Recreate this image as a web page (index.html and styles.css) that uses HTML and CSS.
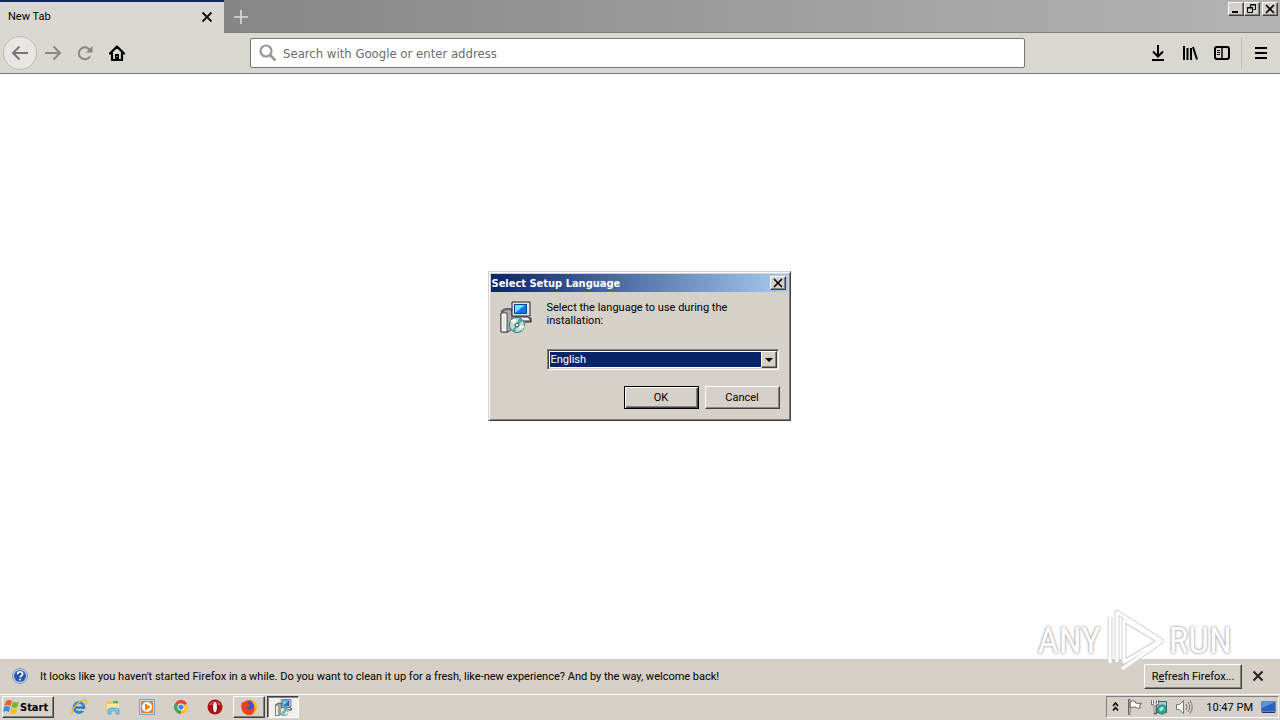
FILE: index.html
```html
<!DOCTYPE html>
<html lang="en">
<head>
<meta charset="utf-8">
<title>New Tab</title>
<link rel="stylesheet" href="styles.css">
</head>
<body>
<div class="desktop">
  <div class="browser">
    <header class="titlebar">
      <div class="tab">
        <span class="tab-title">New Tab</span>
        <button class="plain" aria-label="Close tab"><svg width="12" height="12" viewBox="0 0 12 12"><path d="M1.500 1.500l9 9M10.500 1.500l-9 9" stroke="#111" stroke-width="1.800"/></svg></button>
      </div>
      <button class="plain new-tab" aria-label="Open new tab"><svg width="16" height="16" viewBox="0 0 16 16"><path d="M8 1v14M1 8h14" stroke="#ddd" stroke-width="1.600"/></svg></button>
      <div class="window-buttons">
        <button class="caption" aria-label="Minimize"><svg width="10" height="10" viewBox="0 0 10 10"><path d="M1 8h6" stroke="#000" stroke-width="2"/></svg></button>
        <button class="caption" aria-label="Restore"><svg width="10" height="10" viewBox="0 0 10 10" fill="none" stroke="#000"><path d="M3.500 3.500V.5h5v5h-2M3 1h6M.5 3.500h5v5h-5zM0 4h6"/></svg></button>
        <button class="caption caption-close" aria-label="Close"><svg width="10" height="10" viewBox="0 0 10 10"><path d="M1 1l8 8M9 1l-8 8" stroke="#000" stroke-width="1.600"/></svg></button>
      </div>
    </header>
    <nav class="toolbar">
      <div class="nav-buttons">
        <button class="plain back" aria-label="Back"><svg width="18" height="16" viewBox="0 0 18 16" fill="none" stroke="#777673" stroke-width="2"><path d="M17 8H2M8.500 1.500L2 8l6.500 6.500"/></svg></button>
        <button class="plain tool" aria-label="Forward"><svg width="18" height="16" viewBox="0 0 18 16" fill="none" stroke="#888784" stroke-width="2"><path d="M1 8h15M9.500 1.500L16 8l-6.500 6.500"/></svg></button>
        <button class="plain tool" aria-label="Reload"><svg width="16" height="16" viewBox="0 0 16 16"><path d="M13 11.500A6 6 0 1 1 12.500 4.500" fill="none" stroke="#888784" stroke-width="2"/><path d="M15.500 1v6.500H9z" fill="#888784"/></svg></button>
        <button class="plain tool" aria-label="Home"><svg width="16" height="16" viewBox="0 0 16 16"><path d="M1 8.500L8 1.500l7 7M3 8v7h10V8" fill="none" stroke="#000" stroke-width="2.200" stroke-linejoin="round" stroke-linecap="round"/><path d="M6 15V9h4v6z"/><path d="M7.500 11h1v1h-1z" fill="#ddd"/></svg></button>
      </div>
      <label class="address">
        <svg width="18" height="18" viewBox="0 0 18 18" fill="none" stroke="#999"><circle cx="7" cy="7" r="5.500" stroke-width="2.200"/><path d="M10.500 10.500l6 6" stroke-width="2.600"/></svg>
        <input type="text" aria-label="Address" placeholder="Search with Google or enter address">
      </label>
      <div class="menu-buttons">
        <button class="plain tool" aria-label="Downloads"><svg width="16" height="16" viewBox="0 0 16 16" fill="none" stroke="#000" stroke-width="2"><path d="M8 0v11M3 6.500l5 5 5-5M2 15h12"/></svg></button>
        <button class="plain tool" aria-label="Library"><svg width="16" height="16" viewBox="0 0 16 16" fill="none" stroke="#000" stroke-width="2"><path d="M2 1v14M5.500 3v12M9 3v12M11 2l4 12.500"/></svg></button>
        <button class="plain tool" aria-label="Sidebars"><svg width="16" height="16" viewBox="0 0 16 16" fill="none" stroke="#000"><rect x="1" y="2" width="14" height="12" rx="2" stroke-width="2"/><path d="M8 2v12" stroke-width="1.500"/><path d="M3 5.500h3M3 7.500h3M3 9.500h3"/></svg></button>
        <button class="plain tool app-menu" aria-label="Open menu"><svg width="12" height="14" viewBox="0 0 12 14" stroke="#000" stroke-width="2"><path d="M0 2h12M0 7h12M0 12h12"/></svg></button>
      </div>
    </nav>
    <main class="page"></main>
    <aside class="notice">
      <svg class="help" width="16" height="16" viewBox="0 0 16 16"><circle cx="8" cy="8" r="7.400" fill="#dfe8f8" stroke="#7089b8"/><circle cx="8" cy="8" r="6" fill="#2454b4"/><path d="M5.600 6.200c0-3.200 5-3.200 5-.2 0 1.800-2.400 1.600-2.400 3.400M8.200 10.800v1.800" fill="none" stroke="#fff" stroke-width="1.700"/></svg>
      <p class="notice-text">It looks like you haven't started Firefox in a while. Do you want to clean it up for a fresh, like-new experience? And by the way, welcome back!</p>
      <button class="push refresh"><span>R<u>e</u>fresh Firefox...</span></button>
      <button class="plain" aria-label="Dismiss"><svg width="12" height="12" viewBox="0 0 12 12"><path d="M1.500 1.500l9 9M10.500 1.500l-9 9" stroke="#222" stroke-width="2"/></svg></button>
    </aside>

    <div class="modal-layer">
      <section class="dialog" role="dialog" aria-labelledby="dialog-title">
        <div class="dialog-bar">
          <h1 class="dialog-title" id="dialog-title">Select Setup Language</h1>
          <button class="caption" aria-label="Close dialog"><svg width="10" height="10" viewBox="0 0 10 10"><path d="M1 1l8 8M9 1l-8 8" stroke="#000" stroke-width="1.600"/></svg></button>
        </div>
        <div class="dialog-body">
          <svg class="setup-icon" width="32" height="32" viewBox="0 0 32 32"><use href="#setup"/></svg>
          <div class="dialog-fields">
            <label class="prompt" for="language">Select the language to use during the installation:</label>
            <div class="combo">
              <select id="language"><option>English</option></select>
              <span class="combo-arrow"><svg width="8" height="4" viewBox="0 0 8 4"><path d="M0 0h8L4 4z"/></svg></span>
            </div>
          </div>
        </div>
        <div class="dialog-actions">
          <button class="push default">OK</button>
          <button class="push">Cancel</button>
        </div>
      </section>
    </div>

    <div class="watermark" aria-hidden="true">
      <span>ANY</span>
      <svg width="58" height="66" viewBox="0 0 58 66" fill="none" stroke-linejoin="round"><g stroke="#d0d0d0" stroke-width="5"><path d="M18 12L53 33 18 54z"/><path d="M11 54V4L56 33 16 61"/><path d="M4 9v46"/></g><g stroke="#fff" stroke-width="3"><path d="M18 12L53 33 18 54z"/><path d="M11 54V4L56 33 16 61"/><path d="M4 9v46"/></g></svg>
      <span>RUN</span>
    </div>
  </div>

  <footer class="taskbar">
    <button class="start"><svg width="17" height="16" viewBox="0 0 17 16"><path d="M3 2q3-2 6 0L7.500 7q-3-2-6 0z" fill="#e8602c"/><path d="M10 2.500q3 2 6 0L14.500 8q-3 2-6 0z" fill="#79b82c"/><path d="M1.200 8q3-2 6 0L6 13q-3-2-6 0z" fill="#3b8fdd"/><path d="M8.200 9q3 2 6 0L13 14q-3 2-6 0z" fill="#f6bd24"/></svg>Start</button>
    <div class="launchers">
      <button class="task" aria-label="Internet Explorer"><svg width="16" height="16" viewBox="0 0 16 16" fill="none"><circle cx="8" cy="8.500" r="5" stroke="#278bd8" stroke-width="2.800"/><path d="M4 8.500h9" stroke="#1b70c4" stroke-width="2.200"/><path d="M11 11h5" stroke="#d6d0c8" stroke-width="2"/><path d="M1.500 15C-1 10 11-1 15 1.500c1 .8 0 3-.8 4" stroke="#eeb52c" stroke-width="1.500"/></svg></button>
      <button class="task" aria-label="Explorer"><svg width="16" height="16" viewBox="0 0 16 16"><path d="M1 2h5l1 2h7v9H1z" fill="#e8c767"/><path d="M2 5h12v8H2z" fill="#faeaa2"/><path d="M8 3h5" stroke="#55ad58" stroke-width="2"/><path d="M3 15v-4q0-2 2-2h7q2 0 2 2v4h-3v-3H6v3z" fill="#82c1e9" stroke="#4b91c4" stroke-width=".7"/></svg></button>
      <button class="task" aria-label="Media Player"><svg width="16" height="16" viewBox="0 0 16 16"><path d="M.5.5h15v15H.5z" fill="#b9dcf5" stroke="#6aa8d8"/><path d="M2 2h12v12H2z" fill="#f27f16"/><circle cx="8" cy="8" r="5" fill="#fff"/><path d="M6 4.500L12 8l-6 3.500z" fill="#f27f16"/></svg></button>
      <button class="task" aria-label="Chrome"><svg width="14" height="14" viewBox="0 0 16 16"><path d="M8 8L1.100 4A8 8 0 0 1 15 4z" fill="#e24536"/><path d="M8 8l7-4a8 8 0 0 1-7 12z" fill="#fbc719"/><path d="M8 8v8A8 8 0 0 1 1.100 4z" fill="#3aa655"/><circle cx="8" cy="8" r="4" fill="#fff"/><circle cx="8" cy="8" r="3" fill="#4285e8"/></svg></button>
      <button class="task" aria-label="Opera"><svg width="16" height="16" viewBox="0 0 16 16"><circle cx="8" cy="8" r="7.500" fill="#ad1214"/><path d="M2 6q6-8 12 0" fill="#d95550"/><ellipse cx="8" cy="8" rx="2.500" ry="6" fill="#eee" stroke="#810c0e"/></svg></button>
      <button class="task running" aria-label="Firefox"><svg width="18" height="18" viewBox="0 0 18 18"><circle cx="9" cy="9.500" r="7.500" fill="#f0511f"/><circle cx="9.500" cy="8.500" r="5" fill="#4a4fc0"/><path d="M2 4l2 1q2-2 4-1-1 2 2 3-2 2-4 2 2 4 6 2 3-2 2-5 4 4 0 9-5 4-10 0Q0 11 2 4z" fill="#f0411f"/><path d="M10 1q7 2 7 8t-6 8q5-4 3-9 0-3-4-7z" fill="#fdb52d"/></svg></button>
      <button class="task running active" aria-label="Select Setup Language"><svg width="17" height="17" viewBox="0 0 32 32"><g id="setup"><path d="M1 12l5-4h6v20l-4 3H1z" fill="#aaa" stroke="#444"/><path d="M1 12h6v19H1z" fill="#f8f8f8" stroke="#444"/><path d="M4 15v13" stroke="#ccc"/><path d="M1 11q5-5 11-2" fill="none" stroke="#666" stroke-width="2"/><path d="M14 16h14l3 4H14z" fill="#eee" stroke="#333"/><path d="M12 1h18v14H12z" fill="#e4e4e4" stroke="#222"/><path d="M14.500 3.500h12v9h-12z" fill="#0a7be6" stroke="#003b9c"/><path d="M15 12V4h10z" fill="#6fe0ff"/><path d="M29 17h2v4h-6" fill="none" stroke="#222"/><circle cx="17" cy="24" r="7.500" fill="#b8dfdc" stroke="#307070"/><path d="M17 24L10 20l5-3zM17 24l5 5 3-4z" fill="#f4fff0"/><path d="M17 24l2-7 4 3zM17 24l-5 5 3 2z" fill="#4cab9e"/><circle cx="17" cy="24" r="2" fill="#fff" stroke="#333"/></g></svg></button>
    </div>
    <div class="tray">
      <svg width="7" height="10" viewBox="0 0 7 10" fill="none" stroke="#000" stroke-width="1.500"><path d="M1 4l2.500-3L6 4M1 8.500l2.500-3L6 8.500"/></svg>
      <svg class="flag" width="16" height="16" viewBox="0 0 16 16" fill="#fff" stroke="#666"><path d="M1.500.5h1.500v15H1.500zM3 2.500q3-1.500 5.500 0v1.500q3 1 6 0l-2 3 1 2q-3 1-5.500-1Q6 7.500 3 9z"/></svg>
      <svg width="17" height="16" viewBox="0 0 17 16"><path d="M5.500 2.500h10v11h-10z" fill="#9ccdd0" stroke="#38686b"/><path d="M1.500 1v4h5V1M4 5v9h2" fill="none" stroke="#555" stroke-width="2.500"/><path d="M1.500 1v4h5V1M4 1v13" fill="none" stroke="#fff"/><circle cx="11" cy="10.500" r="4.500" fill="#36a792" stroke="#1d7470"/><path d="M8 10q3-4 5-1-2 4-4 3z" fill="#a8e2d2"/></svg>
      <svg width="17" height="16" viewBox="0 0 17 16" fill="none" stroke="#777"><path d="M.5 5.500h3l4-4v13l-4-4h-3z" fill="#fff"/><path d="M10 5q2 3 0 6M12 3q3.500 5 0 10M14 1.500q4.500 6.500 0 13"/></svg>
      <time class="clock">10:47 PM</time>
      <svg width="15" height="14" viewBox="0 0 15 14"><path d="M.5 1.500h14v10H.5z" fill="#2a62bd" stroke="#6087bd"/><path d="M1 2h13L1 8z" fill="#5b93dd"/><path d="M1 12.500h13" stroke="#173b78"/></svg>
    </div>
  </footer>
</div>
</body>
</html>
```
FILE: styles.css
```css
* { box-sizing: border-box; }

body {
  margin: 0;
  color: #000;
  font: 11px/13px Tahoma, Roboto, sans-serif;
}

button, input, select { font: inherit; color: inherit; }
button { padding: 0; border: 0; }
svg { display: block; flex: none; }
p, h1 { margin: 0; }

.desktop { display: flex; flex-direction: column; height: 100vh; background: #d5cfc7; }
.browser { position: relative; flex: 1; display: flex; flex-direction: column; min-height: 0; }

.plain { display: flex; align-items: center; justify-content: center; background: none; }

.caption, .push, .combo-arrow {
  display: flex;
  align-items: center;
  justify-content: center;
  background: #d5d0c8;
  border: 1px solid;
  border-color: #fff #404040 #404040 #fff;
  box-shadow: inset -1px -1px #86827c;
}
.caption { width: 16px; height: 14px; }

/* Tabs */
.titlebar {
  display: flex;
  height: 33px;
  background: linear-gradient(90deg, #868686 224px, #b4b4b4);
  box-shadow: inset 0 -1px #808080;
}
.tab {
  display: flex;
  align-items: center;
  justify-content: space-between;
  width: 224px;
  padding: 0 11px 2px 8px;
  border-top: 2px solid #0a246a;
  background: #dad7d1;
}
.new-tab { width: 33px; }
.window-buttons { display: flex; margin: 2px 2px 0 auto; }
.caption-close { margin-left: 2px; }

/* Toolbar */
.toolbar {
  display: grid;
  grid-template-columns: 250px 1fr 255px;
  align-items: center;
  height: 41px;
  border-bottom: 1px solid #777;
  background: #dad6d0;
}
.nav-buttons { display: flex; align-items: center; padding-left: 3px; }
.back { width: 34px; height: 34px; border: 1px solid #bdbab5; border-radius: 50%; background: #e8e6e2; }
.tool { width: 32px; height: 32px; }
.address {
  display: flex;
  align-items: center;
  gap: 6px;
  height: 30px;
  padding: 0 8px;
  border: 1px solid #777;
  border-radius: 2px;
  background: #fff;
}
.address input {
  flex: 1;
  min-width: 0;
  padding: 0;
  border: 0;
  outline: 0;
  background: none;
  font-family: "DejaVu Sans Condensed", sans-serif;
  font-size: 13px;
}
.address input::placeholder { color: #6b6b6b; opacity: 1; }
.menu-buttons { display: flex; justify-content: flex-end; padding-right: 1px; }
.app-menu { width: 38px; margin-left: 3px; border-left: 1px solid #c3bfb9; }

.page { flex: 1; background: #fff; }

/* Notification */
.notice { display: flex; align-items: center; height: 35px; padding: 0 16px 1px 12px; background: #d5cfc6; }
.notice-text { flex: 1; margin-left: 12px; white-space: nowrap; }
.refresh { position: relative; z-index: 2; margin-right: 10px; }

/* Dialog */
.modal-layer { position: absolute; inset: 0; display: grid; place-items: center; padding: 0 2px 2px 0; }
.dialog {
  width: 303px;
  padding: 2px;
  border: 1px solid;
  border-color: #d5d0c8 #404040 #404040 #d5d0c8;
  box-shadow: inset 1px 1px #fff, inset -1px -1px #808080;
  background: #d5d0c8;
}
.dialog-bar {
  display: flex;
  align-items: center;
  justify-content: space-between;
  height: 18px;
  padding: 0 2px 0 1px;
  background: linear-gradient(90deg, #0a246a, #a6caf0);
}
.dialog-title { color: #fff; font: bold 11px/13px Tahoma, "DejaVu Sans Condensed", sans-serif; }
.dialog-body { display: flex; gap: 15px; padding: 9px 9px 0; }
.dialog-fields { flex: 1; }
.prompt { display: block; padding-right: 40px; }
.combo {
  position: relative;
  height: 21px;
  margin-top: 22px;
  padding: 1px;
  border: 1px solid;
  border-color: #808080 #fff #fff #808080;
  box-shadow: inset 1px 1px #404040, inset -1px -1px #d5d0c8;
  background: #fff;
}
.combo select {
  display: block;
  width: 100%;
  height: 17px;
  padding: 0 1px;
  border: 1px solid #fff;
  outline: 0;
  appearance: none;
  background: #0a246a;
  color: #fff;
}
.combo-arrow { position: absolute; top: 1px; right: 1px; width: 16px; height: 17px; pointer-events: none; }
.dialog-actions { display: flex; justify-content: flex-end; gap: 6px; padding: 16px 8px 9px; }
.push { width: 75px; height: 23px; }
.push.refresh { width: 98px; height: 25px; }
.default { border-color: #000; box-shadow: inset 1px 1px #fff, inset -1px -1px #404040, inset -2px -2px #86827c; }

/* Watermark */
.watermark {
  position: absolute;
  right: 48px;
  bottom: 20px;
  display: flex;
  align-items: center;
  gap: 5px;
  pointer-events: none;
  color: #fff;
  font: 37px/50px "Liberation Sans Narrow", "Roboto Condensed", Roboto, sans-serif;
  text-shadow: 0 0 2px #999, 0 0 3px #aaa;
}

/* Taskbar */
.taskbar { display: flex; align-items: center; height: 26px; padding: 0 1px 1px 2px; border-top: 1px solid #fff; background: #d5cfc7; }
.start {
  display: flex;
  align-items: center;
  width: 52px;
  height: 22px;
  border: 1px solid;
  border-color: #fff #404040 #404040 #fff;
  box-shadow: inset -1px -1px #808080;
  background: #d5d0c8;
  font: bold 11px/13px Tahoma, "DejaVu Sans Condensed", sans-serif;
}
.launchers { display: flex; gap: 2px; margin-left: 9px; }
.task { display: flex; align-items: center; justify-content: center; width: 32px; height: 22px; background: none; }
.running { border: 1px solid; border-color: #fff #404040 #404040 #fff; box-shadow: inset -1px -1px #808080; }
.active { border-color: #404040 #fff #fff #404040; box-shadow: inset 1px 1px #808080; background: #f1efec; }
.tray {
  display: flex;
  align-items: center;
  gap: 8px;
  height: 22px;
  margin-left: auto;
  padding: 0 2px 0 5px;
  border: 1px solid;
  border-color: #808080 #fff #fff #808080;
}
.clock { margin-left: 5px; }
```
